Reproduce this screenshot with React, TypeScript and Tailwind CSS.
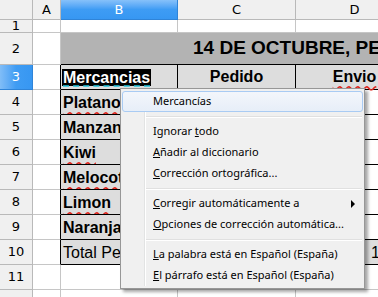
import type { ReactNode } from 'react'

const grid = 'border-r border-b border-[#c6c6c6]'
const table = 'border-r border-b border-black'

function RowHead({ n, selected }: { n: number; selected?: boolean }) {
  return (
    <div
      className={`flex items-center justify-center border-r border-b text-[13px] ${
        selected
          ? 'border-[#2f84d8] bg-gradient-to-r from-[#80bdf7] via-[#3f9cf3] to-[#3797f2] text-white'
          : 'border-[#b9b9b9] bg-[#f0f0f0] text-black'
      }`}
    >
      {n}
    </div>
  )
}

function ColHead({ label, selected }: { label: string; selected?: boolean }) {
  return (
    <div
      className={`flex items-center justify-center border-r border-b text-[13px] ${
        selected
          ? 'border-[#2f84d8] bg-gradient-to-b from-[#86c1fa] via-[#3e9cf4] to-[#3797f2] text-white'
          : 'border-[#b9b9b9] bg-[#f0f0f0] text-black'
      }`}
    >
      {label}
    </div>
  )
}

function Item({ children, hot, arrow }: { children: ReactNode; hot?: boolean; arrow?: boolean }) {
  return (
    <div
      className={`relative mx-px flex h-[21px] items-center rounded-[3px] border pl-[30px] ${
        hot ? 'border-[#a9cbf3] bg-gradient-to-b from-[#f3f6fb] to-[#e7eef8]' : 'border-transparent'
      }`}
    >
      <span className="whitespace-nowrap">{children}</span>
      {arrow && (
        <span className="absolute right-[7px] top-[6px] h-0 w-0 border-y-[4px] border-l-[4px] border-y-transparent border-l-black" />
      )}
    </div>
  )
}

function Sep() {
  return (
    <div className="flex h-[9px] items-center pl-[25px] pr-[2px]">
      <div className="h-[2px] w-full border-t border-b border-t-[#e0e0e0] border-b-white" />
    </div>
  )
}

const fruits = [
  { name: 'Platano', wavy: true },
  { name: 'Manzana', wavy: false },
  { name: 'Kiwi', wavy: true },
  { name: 'Melocoton', wavy: true },
  { name: 'Limon', wavy: true },
  { name: 'Naranja', wavy: false },
]

export default function App() {
  return (
    <div className="relative h-[297px] w-[378px] overflow-hidden bg-white font-['Liberation_Sans',Arial,sans-serif]">
      <div className="grid w-[530px] grid-cols-[33px_28px_117px_118px_118px] grid-rows-[20px_13px_32px_repeat(10,25px)]">
        {/* column headers */}
        <div className="border-r border-b border-[#b9b9b9] bg-[#f0f0f0]" />
        <div className="contents font-['DejaVu_Sans',sans-serif]">
          <ColHead label="A" />
          <ColHead label="B" selected />
          <ColHead label="C" />
          <ColHead label="D" />
        </div>

        {/* row 1 */}
        <div className="contents font-['DejaVu_Sans',sans-serif]"><RowHead n={1} /></div>
        <div className={grid} />
        <div className={grid} />
        <div className={grid} />
        <div className={grid} />

        {/* row 2 */}
        <div className="contents font-['DejaVu_Sans',sans-serif]"><RowHead n={2} /></div>
        <div className="border-r border-b border-r-[#c6c6c6] border-b-[#c6c6c6]" />
        <div className="col-span-3 flex items-center whitespace-nowrap border-b border-black bg-[#b3b3b3] pl-[132px] text-[19px] font-bold text-black">
          14 DE OCTUBRE, PEDIDOS
        </div>

        {/* row 3 */}
        <div className="contents font-['DejaVu_Sans',sans-serif]"><RowHead n={3} selected /></div>
        <div className="border-r border-b border-r-black border-b-[#c6c6c6]" />
        <div className={`${table} flex items-center bg-[#dddddd] pl-[1px]`}>
          <span className="bg-black px-[1px] text-[16px] font-bold leading-[17px] text-white underline decoration-dashed decoration-[#27c7e0] underline-offset-[3px]">
            Mercancias
          </span>
        </div>
        <div className={`${table} flex items-center justify-center bg-[#dddddd] text-[16px] font-bold`}>Pedido</div>
        <div className={`${table} flex items-center justify-center bg-[#dddddd] text-[16px] font-bold`}>
          <span className="underline decoration-wavy decoration-[#e0261e] underline-offset-[3px]">Envio</span>
        </div>

        {/* rows 4-9 */}
        {fruits.map((f, i) => (
          <div key={f.name} className="contents">
            <div className="contents font-['DejaVu_Sans',sans-serif]"><RowHead n={i + 4} /></div>
            <div className="border-r border-b border-r-black border-b-[#c6c6c6]" />
            <div className={`${table} flex items-center overflow-hidden whitespace-nowrap bg-[#dddddd] pl-[2px] pt-[2px] text-[16px] font-bold`}>
              <span className={f.wavy ? 'underline decoration-wavy decoration-[#e0261e] underline-offset-[3px]' : ''}>{f.name}</span>
            </div>
            <div className={table} />
            <div className={table} />
          </div>
        ))}

        {/* row 10 */}
        <div className="contents font-['DejaVu_Sans',sans-serif]"><RowHead n={10} /></div>
        <div className="border-r border-b border-r-black border-b-[#c6c6c6]" />
        <div className={`${table} flex items-center overflow-hidden whitespace-nowrap bg-[#dddddd] pl-[2px] pt-[2px] text-[16px]`}>
          Total Pedidos
        </div>
        <div className={`${table} bg-[#dddddd]`} />
        <div className={`${table} flex items-center bg-[#dddddd] pl-[75px] pt-[2px] text-[16px]`}>150</div>

        {/* rows 11-12 */}
        {[11, 12].map(n => (
          <div key={n} className="contents">
            <div className="contents font-['DejaVu_Sans',sans-serif]"><RowHead n={n} /></div>
            <div className={grid} />
            <div className={grid} />
            <div className={grid} />
            <div className={grid} />
          </div>
        ))}
      </div>

      {/* context menu */}
      <div className="absolute left-[120px] top-[88px] w-[245px] border border-[#979797] bg-[#f0f0f0] py-[2px] font-['Noto_Sans',sans-serif] text-[11px] text-black shadow-[3px_3px_3px_rgba(0,0,0,0.35)]">
        <div className="pointer-events-none absolute bottom-[2px] left-[23px] top-[2px] w-[2px] border-l border-r border-l-[#e2e3e3] border-r-white" />
        <Item hot>Mercancías</Item>
        <Sep />
        <Item>Ignorar <u>t</u>odo</Item>
        <Item><u>A</u>ñadir al diccionario</Item>
        <Item><u>C</u>orrección ortográfica...</Item>
        <Sep />
        <Item arrow><u>C</u>orregir automáticamente a</Item>
        <Item><u>O</u>pciones de corrección automática...</Item>
        <Sep />
        <Item><u>L</u>a palabra está en Español (España)</Item>
        <Item><u>E</u>l párrafo está en Español (España)</Item>
      </div>
    </div>
  )
}
